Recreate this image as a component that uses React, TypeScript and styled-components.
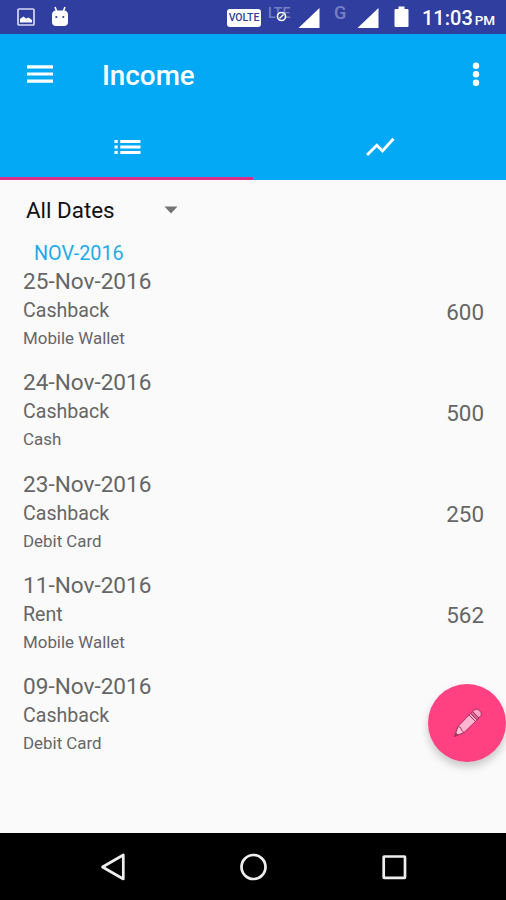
import React from "react";
import styled, { createGlobalStyle } from "styled-components";

const GlobalStyle = createGlobalStyle`
  * { box-sizing: border-box; }
  body { margin: 0; background: #fafafa; font-family: Roboto, "Noto Sans", sans-serif; }
  svg { display: block; flex: none; }
`;

const Screen = styled.div`
  position: relative;
  display: flex;
  flex-direction: column;
  width: 506px;
  height: 900px;
  overflow: hidden;
  background: #fafafa;
`;

const StatusBar = styled.div`
  display: flex;
  align-items: flex-start;
  justify-content: space-between;
  height: 34px;
  flex: none;
  padding: 0 10px 0 17px;
  background: #303f9f;
  color: #fff;
`;

const StatusGroup = styled.div`
  display: flex;
  align-items: flex-start;
  height: 34px;
`;

const StatusIcon = styled.span<{ $top: number; $gap?: number }>`
  margin-top: ${(p) => p.$top}px;
  margin-left: ${(p) => p.$gap ?? 0}px;
`;

const VolteBadge = styled.span`
  width: 34px;
  height: 18px;
  margin-top: 8.5px;
  border-radius: 3px;
  background: #fff;
  color: #303f9f;
  font-size: 10.5px;
  font-weight: 500;
  line-height: 18.5px;
  text-align: center;
`;

const Carrier = styled.span<{ $width: number; $size: number; $gap: number; $top: number }>`
  position: relative;
  width: ${(p) => p.$width}px;
  margin: ${(p) => p.$top}px 0 0 ${(p) => p.$gap}px;
  font-size: ${(p) => p.$size}px;
  font-weight: 500;
  line-height: 16px;
  color: #7580c6;
`;

const DataMark = styled.svg`
  position: absolute;
  left: 8px;
  top: 6px;
`;

const Clock = styled.span`
  width: 74px;
  margin-left: 13px;
  font-size: 20px;
  font-weight: 500;
  line-height: 37px;
  white-space: nowrap;
`;

const Meridiem = styled.small`
  margin-left: 2px;
  font-size: 13.5px;
`;

const AppBar = styled.header`
  display: flex;
  flex-direction: column;
  height: 146px;
  flex: none;
  background: #03a9f4;
  color: #fff;
`;

const Toolbar = styled.div`
  display: flex;
  align-items: center;
  height: 79px;
  padding: 0 23px 0 27px;
`;

const Title = styled.h1`
  flex: 1;
  margin: 4px 0 0 48px;
  font-size: 27.8px;
  font-weight: 500;
  line-height: 34px;
`;

const Tabs = styled.nav`
  display: grid;
  grid-template-columns: 1fr 1fr;
  height: 67px;
`;

const Tab = styled.div<{ $active?: boolean }>`
  display: flex;
  align-items: center;
  justify-content: center;
  border-bottom: 3px solid ${(p) => (p.$active ? "#d92f86" : "transparent")};
  padding: 4px 0 0 1px;
`;

const Content = styled.main`
  flex: 1;
  padding: 12px 22px 0 23px;
`;

const DateSpinner = styled.div`
  display: flex;
  align-items: center;
  justify-content: space-between;
  width: 155px;
  height: 36px;
  padding-left: 3px;
  font-size: 22.4px;
  color: #111;
`;

const MonthHeader = styled.h2`
  height: 39px;
  margin: 0;
  padding: 14px 0 0 11px;
  font-size: 19.8px;
  font-weight: 400;
  line-height: 24px;
  color: #1fabea;
`;

const Entry = styled.section`
  display: flex;
  align-items: flex-start;
  justify-content: space-between;
  height: 101.25px;
  color: #666;
`;

const EntryDate = styled.div`
  padding-top: 1px;
  font-size: 22.6px;
  line-height: 28px;
`;

const Category = styled.div`
  font-size: 19.6px;
  line-height: 29px;
`;

const Account = styled.div`
  font-size: 16.9px;
  line-height: 26px;
`;

const Amount = styled.div`
  margin-top: 30.6px;
  font-size: 22.4px;
  line-height: 28px;
`;

const Fab = styled.button`
  position: absolute;
  left: 428px;
  top: 684px;
  display: flex;
  align-items: center;
  justify-content: center;
  width: 78px;
  height: 78px;
  padding: 0 0 0 1px;
  border: 0;
  border-radius: 50%;
  background: #ff4081;
  box-shadow: 0 5px 9px rgba(0, 0, 0, 0.2);
`;

const NavBar = styled.footer`
  display: flex;
  align-items: center;
  justify-content: space-between;
  height: 67px;
  flex: none;
  padding: 0 99px 0 100px;
  background: #000;
`;

const entries = [
  { date: "25-Nov-2016", category: "Cashback", account: "Mobile Wallet", amount: "600" },
  { date: "24-Nov-2016", category: "Cashback", account: "Cash", amount: "500" },
  { date: "23-Nov-2016", category: "Cashback", account: "Debit Card", amount: "250" },
  { date: "11-Nov-2016", category: "Rent", account: "Mobile Wallet", amount: "562" },
  { date: "09-Nov-2016", category: "Cashback", account: "Debit Card", amount: "" },
];

const SignalIcon = () => (
  <svg width="22" height="21" viewBox="0 0 22 21">
    <path d="M21.5 0V20H0.500Z" fill="#fff" />
  </svg>
);

const PictureIcon = () => (
  <svg width="18" height="18" viewBox="0 0 18 18">
    <rect x="1" y="1" width="16" height="16" rx="1" fill="none" stroke="#d5d9f2" strokeWidth="1.7" />
    <path d="M3 14.5V11L6.5 8.5L9 10.5L11.5 9.5L15 12V14.5Z" fill="#fff" />
  </svg>
);

const RobotIcon = () => (
  <svg width="18" height="21" viewBox="0 0 18 21">
    <path d="M4 1L6 6M14 1L12 6" stroke="#fff" strokeWidth="1.6" />
    <path d="M1 9Q1 4.500 5 4.500H13Q17 4.500 17 9V16Q17 20 13 20H5Q1 20 1 16Z" fill="#fff" />
    <circle cx="5.300" cy="11" r="1.100" fill="#303f9f" />
    <circle cx="12.300" cy="11" r="1.100" fill="#303f9f" />
  </svg>
);

const BatteryIcon = () => (
  <svg width="15" height="22" viewBox="0 0 15 22">
    <path d="M4.500 0.500H10.500V3H13.500Q14.500 3 14.500 4V20Q14.500 21 13.500 21H1.500Q0.500 21 0.500 20V4Q0.500 3 1.500 3H4.500Z" fill="#fff" />
  </svg>
);

const PencilIcon = () => (
  <svg width="30" height="32" viewBox="0 0 30 32">
    <g stroke="#a6325c" strokeWidth="1" strokeLinejoin="round">
      <path d="M1.500 29.500L5 19.500L17.500 6.500L24 13L11 25.500Z" fill="#ffb5d0" />
      <path d="M1.500 29.500L5 19.500L7.500 20.500L8.500 23L11 25.500Z" fill="#ffc4d8" />
      <path d="M17.500 6.500L19.500 4.500L26 11L24 13Z" fill="#d9648f" />
      <path d="M19.500 4.500L22 2.500Q24 1 26.500 3.500Q29.500 6 28 8.500L26 11Z" fill="#ffa4c5" />
      <path d="M16 8L22.500 14.500" fill="none" />
    </g>
    <path d="M1.500 29.500L3 25.500L5.500 28Z" fill="#a6325c" />
  </svg>
);

export default function App() {
  return (
    <>
      <GlobalStyle />
      <Screen>
        <StatusBar>
          <StatusGroup>
            <StatusIcon $top={8}><PictureIcon /></StatusIcon>
            <StatusIcon $top={6} $gap={16}><RobotIcon /></StatusIcon>
          </StatusGroup>
          <StatusGroup>
            <VolteBadge>VOLTE</VolteBadge>
            <Carrier $width={25} $size={14} $gap={7} $top={5}>
              LTE
              <DataMark width="11" height="11" viewBox="0 0 11 11">
                <circle cx="5.500" cy="5.500" r="4" fill="#303f9f" stroke="#fff" strokeWidth="1.600" />
                <path d="M3.500 7.500L7.500 3.500" stroke="#fff" strokeWidth="1.500" />
              </DataMark>
            </Carrier>
            <StatusIcon $top={8} $gap={5}><SignalIcon /></StatusIcon>
            <Carrier $width={14} $size={18} $gap={14} $top={5}>G</Carrier>
            <StatusIcon $top={8} $gap={9}><SignalIcon /></StatusIcon>
            <StatusIcon $top={6} $gap={15}><BatteryIcon /></StatusIcon>
            <Clock>11:03<Meridiem>PM</Meridiem></Clock>
          </StatusGroup>
        </StatusBar>

        <AppBar>
          <Toolbar>
            <svg width="27" height="20" viewBox="0 0 27 20">
              <path d="M0 2.800H26M0 10H26M0 17.200H26" stroke="#fff" strokeWidth="3.200" />
            </svg>
            <Title>Income</Title>
            <svg width="13" height="26" viewBox="0 0 13 26" fill="#fff">
              <circle cx="6" cy="4.700" r="3.200" />
              <circle cx="6" cy="13.200" r="3.200" />
              <circle cx="6" cy="21.700" r="3.200" />
            </svg>
          </Toolbar>
          <Tabs>
            <Tab $active>
              <svg width="27" height="18" viewBox="0 0 27 18">
                <path d="M0.500 3.500H3.700M6.300 3.500H26.500M0.500 9H3.700M6.300 9H26.500M0.500 14.500H3.700M6.300 14.500H26.500" stroke="#fff" strokeWidth="3.200" />
              </svg>
            </Tab>
            <Tab>
              <svg width="29" height="20" viewBox="0 0 29 20">
                <path d="M1 18L10.800 8.200L16.500 14L27.500 1.800" fill="none" stroke="#fff" strokeWidth="2.900" />
              </svg>
            </Tab>
          </Tabs>
        </AppBar>

        <Content>
          <DateSpinner>
            All Dates
            <svg width="14" height="8" viewBox="0 0 14 8"><path d="M0.500 0.500H13.500L7 7.500Z" fill="#737373" /></svg>
          </DateSpinner>
          <MonthHeader>NOV-2016</MonthHeader>
          {entries.map((entry) => (
            <Entry key={entry.date}>
              <div>
                <EntryDate>{entry.date}</EntryDate>
                <Category>{entry.category}</Category>
                <Account>{entry.account}</Account>
              </div>
              <Amount>{entry.amount}</Amount>
            </Entry>
          ))}
        </Content>

        <Fab aria-label="Edit"><PencilIcon /></Fab>

        <NavBar>
          <svg width="26" height="28" viewBox="0 0 26 28">
            <path d="M23.300 2V26L2.500 14Z" fill="none" stroke="#eee" strokeWidth="2.700" strokeLinejoin="round" />
          </svg>
          <svg width="28" height="28" viewBox="0 0 28 28">
            <circle cx="13.500" cy="14" r="12" fill="none" stroke="#eee" strokeWidth="2.700" />
          </svg>
          <svg width="26" height="26" viewBox="0 0 26 26">
            <rect x="2.700" y="2.500" width="21.300" height="21.300" rx="0.500" fill="none" stroke="#eee" strokeWidth="2.700" />
          </svg>
        </NavBar>
      </Screen>
    </>
  );
}
